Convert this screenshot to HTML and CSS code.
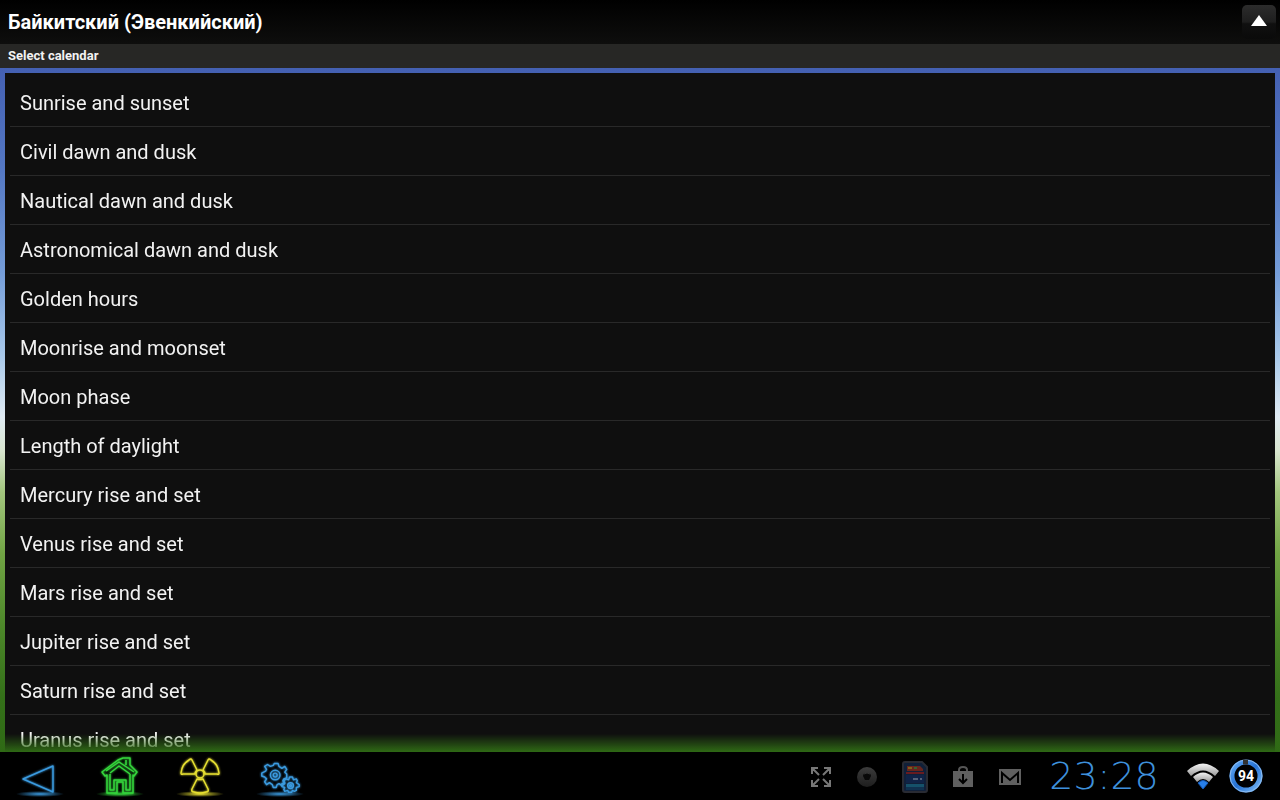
FILE: index.html
```html
<!DOCTYPE html>
<html lang="en">
<head>
  <meta charset="UTF-8">
  <meta name="viewport" content="width=device-width, initial-scale=1.0">
  <title>Select calendar</title>
  <link rel="stylesheet" href="styles.css">
</head>
<body>
  <header class="title-bar">
    <h1>Байкитский (Эвенкийский)</h1>
    <button class="up-button" type="button" aria-label="Up">
      <svg width="18" height="14" viewBox="0 0 18 14"><path d="M9 0L17 11H1Z" fill="#fff"/></svg>
    </button>
  </header>
  <h2 class="subtitle">Select calendar</h2>

  <main class="content">
    <ul class="calendar-list">
      <li><button type="button">Sunrise and sunset</button></li>
      <li><button type="button">Civil dawn and dusk</button></li>
      <li><button type="button">Nautical dawn and dusk</button></li>
      <li><button type="button">Astronomical dawn and dusk</button></li>
      <li><button type="button">Golden hours</button></li>
      <li><button type="button">Moonrise and moonset</button></li>
      <li><button type="button">Moon phase</button></li>
      <li><button type="button">Length of daylight</button></li>
      <li><button type="button">Mercury rise and set</button></li>
      <li><button type="button">Venus rise and set</button></li>
      <li><button type="button">Mars rise and set</button></li>
      <li><button type="button">Jupiter rise and set</button></li>
      <li><button type="button">Saturn rise and set</button></li>
      <li><button type="button">Uranus rise and set</button></li>
    </ul>
  </main>

  <footer class="system-bar">
    <nav class="nav-buttons">
      <button class="nav-button blue" type="button" aria-label="Back">
        <svg width="48" height="48" viewBox="0 0 48 48">
          <path d="M7 27L37 14V40Z"/>
        </svg>
      </button>
      <button class="nav-button green" type="button" aria-label="Home">
        <svg width="48" height="48" viewBox="0 0 48 48">
          <path d="M6 20L22 8L27 6H34V13L41 20L38 24L37 23V41H27V30H21V41H11V23L9 24Z"/>
          <path d="M10 19L23 10L38 20M14 22V38H18V28H30V38H34V22M14 21L23 14L34 22M30 8V13"/>
        </svg>
      </button>
      <button class="nav-button yellow" type="button" aria-label="Recent apps">
        <svg width="48" height="48" viewBox="0 0 48 48">
          <circle cx="24" cy="22" r="4"/>
          <path d="M5 21Q6 12 13 8Q15 6 16 8L21 18Q19 20 19 22H7Q5 23 5 21ZM43 21Q42 12 35 8Q33 6 32 8L27 18Q29 20 29 22H41Q43 23 43 21ZM21 27Q24 28 27 27L32 37Q33 40 30 40Q24 42 18 40Q15 40 16 37Z"/>
        </svg>
      </button>
      <button class="nav-button blue" type="button" aria-label="Settings">
        <svg width="48" height="48" viewBox="-4 -1 50 50">
          <path d="M15 11H19L20 14L23 16L26 14L28 17L26 20L28 22V26L25 27L24 29L26 32L23 34L20 32L18 33L17 36H14L13 33L10 31L7 33L5 30L7 27L5 25L2 24V21L6 19L7 17L5 14L8 12L11 14L14 13Z"/>
          <circle cx="16" cy="23" r="5"/>
          <circle cx="16" cy="23" r="2"/>
          <path d="M31 25H34L35 28L38 27L39 29L38 31L41 33V35L38 36L38 39L36 40L34 39L33 41H30L29 39L26 40L25 38L26 36L23 35V32L26 31L25 29L27 27L30 28Z"/>
          <circle cx="32" cy="34" r="3"/>
          <circle cx="32" cy="34" r="1"/>
        </svg>
      </button>
    </nav>

    <div class="status">
      <div class="notifications">
        <svg width="22" height="22" viewBox="0 0 22 22" fill="none" stroke="#777" stroke-width="2">
          <path d="M2 8V2H8M2 2L9 9M14 2H20V8M20 2L13 9M2 14V20H8M2 20L9 13M14 20H20V14M20 20L13 13"/>
        </svg>
        <svg width="22" height="22" viewBox="0 0 22 22">
          <defs>
            <linearGradient id="ball" x1="0" y1="0" x2="0" y2="1">
              <stop offset="0" stop-color="#3c3c3c"/>
              <stop offset="1" stop-color="#1e1e1e"/>
            </linearGradient>
          </defs>
          <circle cx="11" cy="11" r="10" fill="url(#ball)"/>
          <path d="M7 10Q7 7 11 7Q15 7 15 10L13 14H9Z" fill="#090909"/>
          <path d="M8 8Q11 6 14 8" fill="none" stroke="#333"/>
        </svg>
        <svg width="26" height="32" viewBox="0 0 26 32">
          <path d="M3 1H20L25 6V29Q25 31 23 31H3Q1 31 1 29V3Q1 1 3 1Z" fill="#102039" stroke="#292b33" stroke-width="2"/>
          <path d="M5 5H18L21 8V10H5Z" fill="#68251d"/>
          <path d="M6 6H10V8H6Z" fill="#806018"/><path d="M12 6H15V8H12Z" fill="#366132"/>
          <path d="M4 11H22V13H4Z" fill="#681b20"/>
          <path d="M4 14H22V22H4Z" fill="#102347"/><path d="M11 18H16M18 18H20" stroke="#546179" stroke-width="2"/>
          <path d="M4 23H22V26H4Z" fill="#15516a"/><path d="M4 26H22V29H4Z" fill="#10314f"/>
        </svg>
        <svg width="22" height="24" viewBox="0 0 22 24">
          <path d="M7 7V5Q7 2 11 2Q15 2 15 5V7" fill="none" stroke="#555" stroke-width="2"/>
          <path d="M1 6H21V22H1Z" fill="#606060"/>
          <path d="M11 9V18M7 14L11 18L15 14" fill="none" stroke="#000" stroke-width="2"/>
        </svg>
        <svg width="24" height="18" viewBox="0 0 24 18">
          <path d="M1 1H23V17H1Z" fill="#606060"/>
          <path d="M4 15V5L12 12L20 5V15" fill="none" stroke="#000" stroke-width="2"/>
        </svg>
      </div>
      <time class="clock">23:28</time>
      <div class="signals">
        <svg width="34" height="28" viewBox="0 0 34 28">
          <defs>
            <linearGradient id="metal" x1="0" y1="0" x2="0" y2="1">
              <stop offset="0" stop-color="#f4f4f4"/>
              <stop offset="1" stop-color="#999"/>
            </linearGradient>
          </defs>
          <path d="M1 9Q17 -6 33 9L29 14Q17 3 5 14Z" fill="url(#metal)"/>
          <path d="M7 15Q17 6 27 15L23 20Q17 14 11 20Z" fill="url(#metal)"/>
          <path d="M12 21Q17 16 22 21L17 27Z" fill="#287fe8" stroke="#1258b8"/>
        </svg>
        <div class="battery">
          <svg width="36" height="36" viewBox="0 0 36 36" fill="none">
            <defs>
              <linearGradient id="ring" x1="0" y1="0" x2="1" y2="1">
                <stop offset="0" stop-color="#62aaf5"/>
                <stop offset="0.5" stop-color="#2672d5"/>
                <stop offset="1" stop-color="#79b9f5"/>
              </linearGradient>
            </defs>
            <circle cx="18" cy="18" r="14" stroke="url(#ring)" stroke-width="5"/>
            <circle cx="18" cy="18" r="16" stroke="#8fbdf0"/>
            <path d="M15 4H20" stroke="#333" stroke-width="5"/>
          </svg>
          <span>94</span>
        </div>
      </div>
    </div>
  </footer>
</body>
</html>
```
FILE: styles.css
```css
* {
  box-sizing: border-box;
}
body {
  display: flex;
  flex-direction: column;
  height: 100vh;
  margin: 0;
  overflow: hidden;
  font-family: Roboto, "Liberation Sans", sans-serif;
  color: #f2f2f2;
  background-color: #000;
}
button {
  padding: 0;
  border: none;
  font-family: inherit;
  color: inherit;
  background: none;
  cursor: pointer;
}
svg {
  display: block;
}
.title-bar {
  display: flex;
  flex: none;
  align-items: center;
  justify-content: space-between;
  height: 44px;
  padding: 0 4px 0 8px;
  background: linear-gradient(#000, #0e0e0d);
}
.title-bar h1 {
  margin: 0;
  font-size: 20px;
  line-height: 24px;
  font-weight: 700;
  color: #fff;
}
.up-button {
  display: flex;
  align-items: center;
  justify-content: center;
  width: 34px;
  height: 34px;
  border-radius: 5px;
  background: linear-gradient(#2c2c2c, #1e1e1e 50%, #101010 55%, #0a0a0a);
}
.subtitle {
  flex: none;
  margin: 0;
  padding: 0 8px;
  font-size: 13px;
  line-height: 24px;
  font-weight: 700;
  background-color: #272725;
}
/* sky and grass behind the list */
.content {
  flex: 1;
  min-height: 0;
  padding: 5px 5px 0;
  background: linear-gradient(#4460b2, #5478c4 15%, #759dd8 30%, #a9c9ea 42%, #e0ebf3 51%, #d9e6d0 56%, #a3c67e 62%, #71a444 71%, #4c8729 82%, #347019 92%, #2f6a15);
}
.calendar-list {
  height: 100%;
  margin: 0;
  padding: 5px 5px 0;
  overflow: hidden;
  list-style: none;
  background-color: #0f0f0f;
  -webkit-mask-image: linear-gradient(#000 calc(100% - 18px), transparent);
  mask-image: linear-gradient(#000 calc(100% - 18px), transparent);
}
.calendar-list li {
  border-bottom: 1px solid #292929;
}
.calendar-list button {
  display: block;
  width: 100%;
  padding: 2px 10px 0;
  font-size: 20px;
  line-height: 46px;
  text-align: left;
}
.system-bar {
  display: flex;
  flex: none;
  align-items: center;
  justify-content: space-between;
  height: 48px;
  padding: 0 16px;
  background-color: #000;
}
.nav-buttons {
  display: flex;
  gap: 32px;
}
/* neon outline with a glow on the floor */
.nav-button {
  width: 48px;
  height: 48px;
  background: radial-gradient(ellipse 24px 3px at 50% 42px, currentColor, transparent);
}
.nav-button svg {
  fill: none;
  stroke: currentColor;
  stroke-width: 1.5;
  stroke-linejoin: round;
  filter: drop-shadow(0 0 1px currentColor);
}
.blue {
  color: #3b9be0;
}
.green {
  color: #35d63c;
}
.yellow {
  color: #e6df32;
}
.status,
.notifications,
.signals {
  display: flex;
  align-items: center;
}
.status {
  gap: 20px;
}
.notifications {
  gap: 24px;
  padding-top: 2px;
}
.signals {
  gap: 8px;
}
.clock {
  width: 124px;
  font-family: "DejaVu Sans", sans-serif;
  font-size: 38px;
  line-height: 48px;
  font-weight: 200;
  text-align: center;
  color: #3e91dc;
}
.battery {
  display: grid;
  place-items: center;
}
.battery svg,
.battery span {
  grid-area: 1 / 1;
}
.battery span {
  font-size: 14px;
  line-height: 16px;
  font-weight: 700;
  color: #fff;
}
```
